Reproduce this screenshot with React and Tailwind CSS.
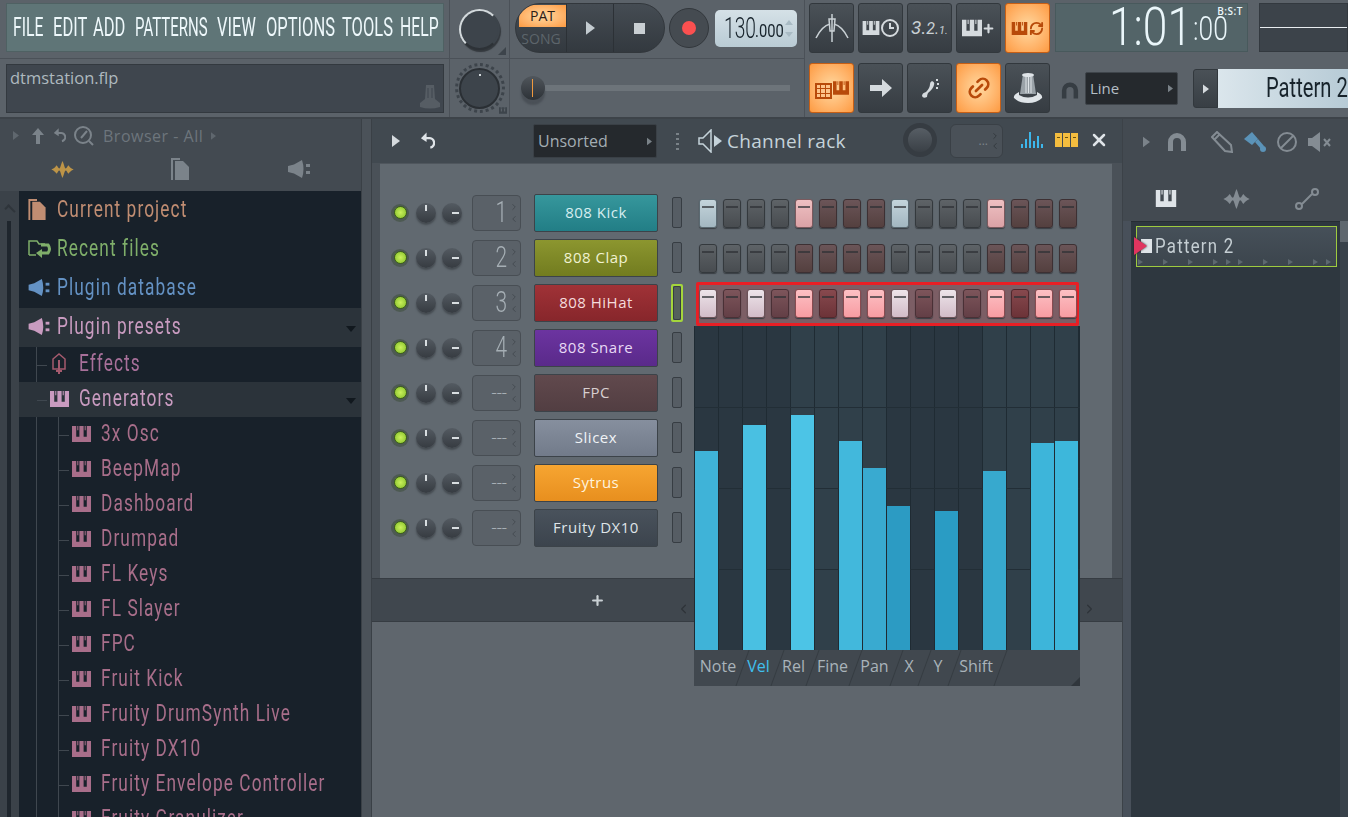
import { Link2, RefreshCw, Plus, X, ChevronLeft, ChevronRight } from "lucide-react";

const roboto = "font-['Roboto','Liberation_Sans',sans-serif]";
const sans = "font-['Open_Sans','Noto_Sans',sans-serif]";

// no condensed face is installed, so narrow text gets squeezed with scale-x
function Narrow({ className, children }) {
  return <span className={`inline-block whitespace-nowrap ${roboto} ${className}`}>{children}</span>;
}

function Piano({ className }) {
  return (
    <svg viewBox="0 0 18 15" className={className} fill="currentColor">
      <path fillRule="evenodd" d="M0 0H18V15H0Z M4 0h3v10H4Z M11 0h3v10h-3Z M5 0h1v4H5Z M12 0h1v4h-1Z" />
    </svg>
  );
}

function Wave({ className }) {
  return (
    <svg viewBox="0 0 21 16" className={className} fill="currentColor">
      <path d="M0 8C3 7 4 5 5 4C6 5 6.500 7 7.500 7C8.500 7 9 3 10.500 0C12 3 12.500 7 13.500 7C14.500 7 15 5 16 4C17 5 18 7 21 8C18 9 17 11 16 12C15 11 14.500 9 13.500 9C12.500 9 12 13 10.500 16C9 13 8.500 9 7.500 9C6.500 9 6 11 5 12C4 11 3 9 0 8Z" />
    </svg>
  );
}

function PluginIcon({ className }) {
  return (
    <svg viewBox="0 0 22 18" className={className} fill="currentColor">
      <path d="M0 6L6 4.500L14 0Q17 9 14 18L6 13.500L0 12Z" />
      <rect x="18" y="4" width="4" height="3" />
      <rect x="18" y="11" width="4" height="3" />
    </svg>
  );
}

function Files({ className }) {
  return (
    <svg viewBox="0 0 18 22" className={className} fill="currentColor">
      <path d="M0 0H9V2H2V22H0Z" />
      <path d="M4 3H12L18 9V22H4Z" />
    </svg>
  );
}

function Magnet({ className }) {
  return (
    <svg viewBox="0 0 20 20" className={className} fill="currentColor">
      <path d="M1 19V10a9 9 0 0 1 18 0V19H14V10a4 4 0 0 0-8 0V19Z" />
    </svg>
  );
}

function UndoIcon({ className }) {
  return (
    <svg viewBox="0 0 16 18" className={className} fill="none" stroke="currentColor" strokeWidth="2.500">
      <path d="M3 6H9a5 5 0 0 1 2 10" />
      <path d="M7 0L1 6L7 10Z" fill="currentColor" stroke="none" />
    </svg>
  );
}

function Tri({ className }) {
  return (
    <svg viewBox="0 0 8 12" className={className} fill="currentColor">
      <path d="M0 0L8 6L0 12Z" />
    </svg>
  );
}

function Knob({ tick = "top" }) {
  return (
    <div className="relative w-5 h-5 rounded-full bg-linear-to-b from-[#545b62] to-[#363b41] shadow-[0_2px_2px_#444a50]">
      {tick === "top" && <div className="absolute left-1/2 top-[2px] -ml-px w-[2px] h-[6px] bg-[#d8dde0]" />}
      {tick === "side" && <div className="absolute left-[10px] top-[9px] w-[7px] h-[2px] bg-[#d8dde0]" />}
    </div>
  );
}

function ToolButton({ on, children }) {
  const look = on
    ? "bg-radial from-[#ffd9a0] to-[#fd9a3f] border-[#c75f15]"
    : "bg-linear-to-b from-[#4a5157] to-[#363c42] border-[#32383d]";
  return (
    <div className={`w-[45px] h-[50px] rounded-[3px] border flex items-center justify-center ${look}`}>
      {children}
    </div>
  );
}

const stepLook = {
  gray: "from-[#5e6367] to-[#484c50] border-[#34393d]",
  brown: "from-[#6b5558] to-[#54403f] border-[#3d3033]",
  blue: "from-[#c4d4db] to-[#a3b7c1] border-[#5b6a72]",
  pink: "from-[#eec0c2] to-[#dba2a6] border-[#7c5a5e]",
  white: "from-[#ede4ea] to-[#d2bcc8] border-[#6c5258]",
  rose: "from-[#fcc0c4] to-[#f79ca2] border-[#8a4b50]",
  wine: "from-[#7d555b] to-[#633f46] border-[#4a3036]",
  dark: "from-[#87494e] to-[#6c3338] border-[#51282d]",
};

function Step({ kind }) {
  return (
    <div className={`w-[18px] h-[29px] rounded-[3px] border bg-linear-to-b pt-[6px] shadow-[0_1px_1px_#3a3f44] ${stepLook[kind]}`}>
      <div className="mx-auto w-[12px] h-[2px] bg-[#2e3135]/70" />
    </div>
  );
}

const channels = [
  { name: "808 Kick", num: "1", color: "from-[#36979c] to-[#227e86]", text: "text-[#d6eef0]" },
  { name: "808 Clap", num: "2", color: "from-[#8c962f] to-[#727c1f]", text: "text-[#f0f2d0]" },
  { name: "808 HiHat", num: "3", color: "from-[#a03237] to-[#87262b]", text: "text-[#f5dcdc]", selected: true },
  { name: "808 Snare", num: "4", color: "from-[#6c34a0] to-[#5a2a8a]", text: "text-[#e8daf5]" },
  { name: "FPC", num: "---", color: "from-[#61494d] to-[#523e42]", text: "text-[#d8cfd0]" },
  { name: "Slicex", num: "---", color: "from-[#868f9e] to-[#727b8a]", text: "text-[#f0f3f6]" },
  { name: "Sytrus", num: "---", color: "from-[#f6a531] to-[#e88f1e]", text: "text-[#fff4df]" },
  { name: "Fruity DX10", num: "---", color: "from-[#49525c] to-[#3c444d]", text: "text-[#dfe4e8]" },
];

const patterns = [
  ["blue", "gray", "gray", "gray", "pink", "brown", "brown", "brown", "blue", "gray", "gray", "gray", "pink", "brown", "brown", "brown"],
  ["gray", "gray", "gray", "gray", "brown", "brown", "brown", "brown", "gray", "gray", "gray", "gray", "brown", "brown", "brown", "brown"],
  ["white", "wine", "white", "wine", "rose", "dark", "rose", "rose", "white", "wine", "white", "wine", "rose", "dark", "rose", "rose"],
];

const bars = [
  ["h-[199px]", "bg-[#3fb3d8]"], null,
  ["h-[225px]", "bg-[#49c0e2]"], null,
  ["h-[235px]", "bg-[#4cc4e6]"], null,
  ["h-[209px]", "bg-[#42b8dc]"],
  ["h-[182px]", "bg-[#39aad0]"],
  ["h-[144px]", "bg-[#2c9bc3]"], null,
  ["h-[139px]", "bg-[#2a9cc4]"], null,
  ["h-[179px]", "bg-[#37a9ce]"], null,
  ["h-[207px]", "bg-[#3db5da]"],
  ["h-[209px]", "bg-[#3db7db]"],
];

const tabs = [
  ["Note", "w-[46px]"], ["Vel", "w-[35px]"], ["Rel", "w-[35px]"], ["Fine", "w-[43px]"],
  ["Pan", "w-[41px]"], ["X", "w-[28px]"], ["Y", "w-[30px]"], ["Shift", "w-[46px]"],
];

const menus = [
  ["FILE", "w-[40px]", "scale-x-[0.63]"], ["EDIT", "w-[40px]", "scale-x-[0.66]"], ["ADD", "w-[42px]", "scale-x-[0.66]"], ["PATTERNS", "w-[82px]", "scale-x-[0.6]"],
  ["VIEW", "w-[49px]", "scale-x-[0.66]"], ["OPTIONS", "w-[76px]", "scale-x-[0.66]"], ["TOOLS", "w-[58px]", "scale-x-[0.66]"], ["HELP", "w-[38px]", "scale-x-[0.63]"],
];

const clipTicks = ["w-[25px]", "w-[25px]", "w-[25px]", "w-[13px]", "w-[12px]", "w-[25px]", "w-[25px]", "w-[25px]", "w-[13px]", "w-[5px]"];

const generators = [
  "3x Osc", "BeepMap", "Dashboard", "Drumpad", "FL Keys", "FL Slayer", "FPC", "Fruit Kick",
  "Fruity DrumSynth Live", "Fruity DX10", "Fruity Envelope Controller", "Fruity Granulizer",
];

function TopBar() {
  return (
    <div className="h-[119px] shrink-0 flex bg-[#5b6269] border-b-2 border-[#3d4349]">
      <div className="w-[450px] shrink-0 flex flex-col border-r border-[#4b5158]">
        <div className="h-[59px] border-b border-[#4b5158] pl-[6px] pt-[3px]">
          <div className="w-[438px] h-[49px] bg-[#5f7577] border border-[#4f6163] flex items-center pl-[6px] text-[#eef8fb]">
            {menus.map(([m, w, s]) => (
              <div key={m} className={w}>
                <Narrow className={`text-[25px] origin-left ${s}`}>{m}</Narrow>
              </div>
            ))}
          </div>
        </div>
        <div className="pl-[6px] pt-[5px]">
          <div className={`relative w-[438px] h-[49px] bg-[#3f464e] border border-[#33393f] pl-[3px] pt-px text-[16.500px] font-medium text-[#aeb9bf] ${sans}`}>
            dtmstation.flp
            <svg viewBox="0 0 20 24" className="absolute right-[3px] bottom-[3px] w-[20px] h-[24px]" fill="#565d64">
              <path d="M6 0H14L15 14L20 18V22Q10 25 0 22V18L5 14Z" />
              <path d="M8 3V13M12 3V13" stroke="#3f464e" strokeWidth="1" />
            </svg>
          </div>
        </div>
      </div>

      <div className="w-[60px] shrink-0 flex flex-col border-r border-[#4b5158]">
        <div className="relative h-[59px] border-b border-[#4b5158] flex items-center justify-center">
          <div className="w-[41px] h-[41px] rounded-full bg-[#3d444b] border-2 border-[#d3d9dc] border-r-[#3d444b] border-b-[#2d3237] shadow-[1px_2px_1px_#33383d]" />
          <div className="absolute right-[3px] bottom-[3px] w-0 h-0 border-l-[8px] border-l-transparent border-b-[8px] border-b-[#3d444b]" />
        </div>
        <div className="relative flex-1 flex items-center justify-center">
          <div className="w-[50px] h-[50px] rounded-full border-[3px] border-dotted border-[#3d444b] flex items-center justify-center">
            <div className="relative w-[41px] h-[41px] rounded-full bg-[#3d444b] border-2 border-[#2a2f34]">
              <div className="absolute left-1/2 top-[4px] -ml-px w-[2px] h-[2px] bg-[#d3d9dc]" />
            </div>
          </div>
          <Piano className="absolute right-[2px] bottom-[3px] w-[8px] h-[7px] text-[#3d444b]" />
        </div>
      </div>

      <div className="w-[295px] shrink-0 flex flex-col border-r border-[#4b5158]">
        <div className="h-[59px] border-b border-[#4b5158] pl-[5px] pt-[3px] flex gap-[4px]">
          <div className="w-[150px] h-[50px] rounded-[25px] bg-linear-to-b from-[#454c53] to-[#33393f] border border-[#32373c] flex overflow-hidden">
            <div className="w-[51px] border-r border-[#2c3136] flex flex-col items-center">
              <div className={`mt-[1px] ml-[3px] w-[47px] h-[22px] rounded-tl-[14px] bg-radial from-[#ffd9a0] to-[#fd9a3f] text-[#2b2018] text-[14px] leading-[22px] text-center ${sans}`}>PAT</div>
              <div className={`mt-[3px] text-[14px] leading-[18px] text-[#5d656b] ${sans}`}>SONG</div>
            </div>
            <div className="w-[47px] border-r border-[#2c3136] flex items-center justify-center">
              <Tri className="w-[9px] h-[14px] text-[#c3cbd0]" />
            </div>
            <div className="flex-1 flex items-center justify-center">
              <div className="w-[11px] h-[11px] bg-[#c9cfd3]" />
            </div>
          </div>
          <div className="w-[40px] h-[40px] mt-[5px] rounded-full bg-[#454b51] border border-[#32373c] flex items-center justify-center">
            <div className="w-[14px] h-[14px] rounded-full bg-[#fb5050]" />
          </div>
          <div className="relative ml-[2px] mt-[7px] w-[82px] h-[37px] rounded-[5px] bg-linear-to-b from-[#d5e1e7] to-[#b9cbd4] text-[#16222a] overflow-hidden">
            <Narrow className="absolute left-[9px] top-[-1px] text-[30px] leading-[38px] font-light origin-left scale-x-[0.64]">130</Narrow>
            <Narrow className="absolute left-[40px] top-[9px] text-[18px] leading-[24px] origin-left scale-x-[0.82]">.000</Narrow>
            <div className="absolute right-[4px] top-[10px] w-0 h-0 border-x-[4px] border-x-transparent border-b-[5px] border-b-[#a9bbc4]" />
            <div className="absolute right-[4px] bottom-[10px] w-0 h-0 border-x-[4px] border-x-transparent border-t-[5px] border-t-[#a9bbc4]" />
          </div>
        </div>
        <div className="flex-1 flex items-center pl-[11px]">
          <div className="relative w-[24px] h-[24px] rounded-full bg-linear-to-b from-[#50565c] to-[#2d3237] shadow-[0_5px_2px_#4a5057] z-10">
            <div className="absolute left-[11px] top-[3px] w-[1px] h-[18px] bg-[#f09a3e]" />
          </div>
          <div className="w-[245px] h-[6px] bg-[#6d747a]" />
        </div>
      </div>

      <div className="w-[250px] shrink-0 flex flex-col pl-[4px] gap-[10px] pt-[3px]">
        <div className="flex gap-[4px]">
          <ToolButton>
            <svg viewBox="0 0 34 28" className="w-[34px] h-[28px]" fill="none" stroke="#c9d0d4" strokeWidth="1.500">
              <path d="M1 24Q7 12 15 10M33 24Q27 12 19 10" />
              <path d="M14 5h6l-1 12h-4Z" />
              <path d="M17 0V28" />
            </svg>
          </ToolButton>
          <ToolButton>
            <div className="flex items-center gap-[1px] text-[#d5dade]">
              <Piano className="w-[18px] h-[14px]" />
              <svg viewBox="0 0 18 18" className="w-[18px] h-[18px]" fill="none" stroke="currentColor" strokeWidth="2">
                <circle cx="9" cy="9" r="8" />
                <path d="M9 4V9H13" />
              </svg>
            </div>
          </ToolButton>
          <ToolButton>
            <div className={`flex items-baseline italic text-[#c9d0d4] ${roboto}`}>
              <span className="text-[19px]">3.</span>
              <span className="text-[16px]">2.</span>
              <span className="text-[11px]">1.</span>
            </div>
          </ToolButton>
          <ToolButton>
            <div className="flex items-center text-[#d5dade]">
              <Piano className="w-[20px] h-[18px]" />
              <Plus className="w-[13px] h-[13px]" strokeWidth={4} />
            </div>
          </ToolButton>
          <ToolButton on>
            <div className="flex items-center gap-[1px] text-[#b84a0a]">
              <Piano className="w-[17px] h-[13px]" />
              <RefreshCw className="w-[15px] h-[15px]" strokeWidth={3} />
            </div>
          </ToolButton>
        </div>
        <div className="flex gap-[4px]">
          <ToolButton on>
            <div className="flex items-end gap-[1px] text-[#b84a0a]">
              <div className="w-[17px] h-[16px] border-2 border-[#b84a0a] grid grid-cols-3 gap-[1px] bg-[#b84a0a]">
                {[0, 1, 2, 3, 4, 5, 6, 7, 8].map((i) => <div key={i} className="bg-[#fdc48a]" />)}
              </div>
              <Piano className="w-[16px] h-[22px]" />
            </div>
          </ToolButton>
          <ToolButton>
            <svg viewBox="0 0 22 18" className="w-[22px] h-[18px]" fill="#d5dade">
              <path d="M0 6H12V0L22 9L12 18V12H0Z" />
            </svg>
          </ToolButton>
          <ToolButton>
            <svg viewBox="0 0 20 22" className="w-[20px] h-[22px]" fill="#d5dade">
              <path d="M12 4Q15 5 14 8Q13 12 8 16Q7 18 7 20Q3 22 2 19Q2 16 6 15Q10 11 10 7Q10 5 12 4Z" />
              <rect x="16" y="2" width="2" height="2" />
              <rect x="17" y="6" width="2" height="2" />
              <rect x="16" y="10" width="2" height="2" />
            </svg>
          </ToolButton>
          <ToolButton on>
            <Link2 className="w-[26px] h-[26px] text-[#b84a0a] -rotate-45" strokeWidth={2.500} />
          </ToolButton>
          <ToolButton>
            <svg viewBox="0 0 30 32" className="w-[30px] h-[32px]">
              <path d="M10 2H20L23 22H7Z" fill="#9aa2a8" />
              <path d="M13 5V21M15.500 5V21M18 5V21" stroke="#dfe4e8" strokeWidth="1" />
              <ellipse cx="15" cy="3" rx="6" ry="2" fill="#dfe4e8" />
              <path d="M6 20Q0 23 1 26Q6 31 15 31Q24 31 29 26Q30 23 24 20L24 23Q15 28 6 23Z" fill="#dfe4e8" />
            </svg>
          </ToolButton>
        </div>
      </div>

      <div className="flex-1 flex flex-col pt-[3px] min-w-0">
        <div className="flex h-[49px]">
          <div className="relative w-[193px] bg-[#536468] border border-[#48595c] text-[#eaf6fa] overflow-hidden">
            <Narrow className="absolute left-[53px] top-0 text-[54px] leading-[46px] font-light origin-left scale-x-[0.82]">1:01</Narrow>
            <Narrow className="absolute left-[137px] top-[13px] text-[33px] leading-[24px] font-light origin-left scale-x-[0.8]">:00</Narrow>
            <span className={`absolute right-[4px] top-[2px] text-[10px] leading-[10px] tracking-[0.5px] font-semibold ${sans}`}>B:S:T</span>
          </div>
          <div className="ml-[11px] flex-1 bg-[#3c434a] border border-[#33393f] flex items-center">
            <div className="w-full h-px bg-[#e8edf0]" />
          </div>
        </div>
        <div className="flex items-center mt-[17px]">
          <Magnet className="w-[18px] h-[19px] ml-[6px] mt-[4px] text-[#363d43]" />
          <div className={`ml-[6px] w-[93px] h-[33px] rounded-[2px] bg-[#25292d] border border-[#3f454b] flex items-center justify-between px-[4px] text-[15px] text-[#b5bfc5] ${sans}`}>
            Line
            <Tri className="w-[5px] h-[9px] text-[#7a8288]" />
          </div>
          <div className="ml-[15px] w-[25px] h-[39px] shrink-0 rounded-l-[3px] bg-linear-to-b from-[#4a5157] to-[#383e44] border border-[#32383d] flex items-center justify-center">
            <Tri className="w-[6px] h-[10px] text-[#d5dade]" />
          </div>
          <div className="flex-1 h-[39px] pl-[48px] bg-linear-to-r from-[#dbe6ec] to-[#b7cbd6] text-[#17232b] overflow-hidden">
            <Narrow className="text-[28px] leading-[38px] origin-left scale-x-[0.72]">Pattern 2</Narrow>
          </div>
        </div>
      </div>
    </div>
  );
}

function BrowserRow({ label, color, indent, icon, open, tall, bg, connector }) {
  return (
    <div className={`relative flex items-center shrink-0 pb-[2px] ${tall ? "h-[39px]" : "h-[35px]"} ${indent} ${bg || ""} ${color}`}>
      {connector && <div className={`absolute top-1/2 w-[10px] h-px bg-[#3f474f] ${connector}`} />}
      <div className="w-[29px] shrink-0 flex items-center">{icon}</div>
      <Narrow className="mb-[2px] text-[24px] leading-[30px] tracking-[1.500px] origin-left scale-x-[0.72]">{label}</Narrow>
      {open && <div className="absolute right-[5px] top-1/2 -mt-[2px] w-0 h-0 border-x-[5px] border-x-transparent border-t-[6px] border-t-[#11181e]" />}
    </div>
  );
}

function Browser() {
  return (
    <div className="w-[361px] shrink-0 flex flex-col bg-[#434a51]">
      <div className="h-[72px] shrink-0">
        <div className={`h-[33px] flex items-center pl-[13px] text-[#6d757c] text-[16px] tracking-[0.5px] ${sans}`}>
          <Tri className="w-[6px] h-[11px] text-[#5f676e]" />
          <svg viewBox="0 0 12 16" className="ml-[13px] w-[12px] h-[16px]" fill="#7b838a">
            <path d="M6 0L12 7H8V16H4V7H0Z" />
          </svg>
          <UndoIcon className="ml-[9px] w-[13px] h-[15px] text-[#7b838a]" />
          <svg viewBox="0 0 20 20" className="ml-[8px] w-[20px] h-[20px]" fill="none" stroke="#7b838a" strokeWidth="2">
            <circle cx="9" cy="9" r="8" />
            <path d="M7 12L13 5M15 15L19 19" />
          </svg>
          <span className="ml-[9px]">Browser - All</span>
          <Tri className="ml-[8px] w-[5px] h-[10px] text-[#5f676e]" />
        </div>
        <div className="relative h-[37px]">
          <Wave className="absolute left-[51px] top-[9px] w-[23px] h-[17px] text-[#bd9447]" />
          <Files className="absolute left-[171px] top-[6px] w-[18px] h-[22px] text-[#7b838a]" />
          <PluginIcon className="absolute left-[288px] top-[8px] w-[22px] h-[18px] text-[#7b838a]" />
        </div>
      </div>
      <div className="flex-1 flex min-h-0">
        <div className="w-[19px] shrink-0 bg-[#3b4249] flex flex-col items-center pt-[14px]">
          <div className="w-[10px] h-[6px] border-l-2 border-t-2 border-[#2f353b] rotate-45 mt-[2px]" />
          <div className="w-[4px] flex-1 mt-[8px] -ml-[2px] bg-[#1f262d]" />
        </div>
        <div className="relative flex-1 bg-[#18212a] flex flex-col overflow-hidden">
          <div className="absolute left-[17px] top-[156px] bottom-0 w-px bg-[#3f474f]" />
          <div className="absolute left-[39px] top-[226px] bottom-0 w-px bg-[#3f474f]" />
          <BrowserRow tall label="Current project" color="text-[#c08d72]" indent="pl-[9px]" icon={<Files className="w-[18px] h-[21px]" />} />
          <BrowserRow tall label="Recent files" color="text-[#7fae6a]" indent="pl-[9px]" icon={
            <svg viewBox="0 0 24 20" className="w-[24px] h-[20px] shrink-0" fill="none" stroke="currentColor" strokeWidth="1.500">
              <path d="M1 16V2H9L11 5H17" />
              <path d="M1 16H8" />
              <path d="M13 6H20Q23 10 20 14H13" strokeWidth="3" />
              <path d="M14 10L8 14L14 19Z" fill="currentColor" stroke="none" />
            </svg>
          } />
          <BrowserRow tall label="Plugin database" color="text-[#6492c4]" indent="pl-[9px]" icon={<PluginIcon className="w-[22px] h-[17px] shrink-0" />} />
          <BrowserRow tall open label="Plugin presets" color="text-[#c99bc0]" indent="pl-[9px]" bg="bg-[#2b333a]" icon={<PluginIcon className="w-[22px] h-[17px] shrink-0" />} />
          <BrowserRow label="Effects" connector="left-[18px]" color="text-[#a8709a]" indent="pl-[31px]" icon={
            <svg viewBox="0 0 14 22" className="w-[14px] h-[22px] shrink-0 ml-[2px]" fill="none" stroke="#a45a6e" strokeWidth="1.500">
              <path d="M1 6L7 1L13 6V16H1Z" />
              <path d="M7 7V21M4 18H10" strokeWidth="2" />
            </svg>
          } />
          <BrowserRow open label="Generators" connector="left-[18px]" color="text-[#c99bc0]" indent="pl-[31px]" bg="bg-[#2b333a]" icon={<Piano className="w-[19px] h-[16px] shrink-0" />} />
          {generators.map((g) => (
            <BrowserRow key={g} label={g} connector="left-[40px]" color="text-[#a86e8a]" indent="pl-[53px]" icon={<Piano className="w-[19px] h-[16px] shrink-0" />} />
          ))}
        </div>
      </div>
    </div>
  );
}

function GraphEditor() {
  return (
    <div className="absolute left-[322px] top-[207px] w-[386px] h-[360px] flex flex-col z-20">
      <div className="relative h-[324px] flex pl-px bg-[#1f2b33]">
        <div className="absolute inset-x-0 top-[81px] h-px bg-[#222e36]" />
        <div className="absolute inset-x-0 top-[162px] h-px bg-[#222e36]" />
        <div className="absolute inset-x-0 top-[243px] h-px bg-[#222e36]" />
        {bars.map((b, i) => {
          const shade = Math.floor(i / 4) % 2 === 0 ? "bg-[#2b3942]/90" : "bg-[#32424d]/90";
          return (
            <div key={i} className={`w-[23px] mr-px flex flex-col justify-end ${shade}`}>
              {b && <div className={`relative ${b[0]} ${b[1]}`} />}
            </div>
          );
        })}
      </div>
      <div className={`relative flex-1 bg-[#41484f] flex items-center pl-px text-[16px] text-[#a9b3ba] ${sans}`}>
        {tabs.map(([t, w]) => (
          <div key={t} className={`relative h-full pb-[4px] flex items-center justify-center ${w} ${t === "Vel" ? "text-[#3fc0ee]" : ""}`}>
            {t}
            <div className="absolute -right-[2px] top-0 h-full w-px bg-[#363c42] -skew-x-[20deg]" />
          </div>
        ))}
        <div className="absolute right-0 bottom-0 w-0 h-0 border-l-[9px] border-l-transparent border-b-[9px] border-b-[#30363c]" />
      </div>
    </div>
  );
}

function ChannelRow({ ch, index }) {
  const steps = patterns[index];
  return (
    <div className="relative h-[45px] flex items-center pl-[11px]">
      <div className="w-[18px] h-[18px] rounded-full bg-[#4d5a52] flex items-center justify-center">
        <div className="w-[13px] h-[13px] rounded-full border border-[#3c6018] bg-radial from-[#c9f05a] to-[#84c026]" />
      </div>
      <div className="ml-[7px]"><Knob /></div>
      <div className="ml-[6px]"><Knob tick="side" /></div>
      <div className="relative ml-[10px] w-[49px] h-[36px] rounded-[4px] bg-[#5a6168] border border-[#484e54] flex items-center justify-end pr-[13px] text-[#a6afb5]">
        <Narrow className={`font-light origin-right ${ch.num === "---" ? "text-[18px] scale-x-[1]" : "text-[29px] scale-x-[0.72]"}`}>{ch.num}</Narrow>
        <ChevronRight className="absolute right-px top-[6px] w-[10px] h-[10px] text-[#41474d]" strokeWidth={2} />
        <ChevronLeft className="absolute right-px bottom-[6px] w-[10px] h-[10px] text-[#41474d]" strokeWidth={2} />
      </div>
      <div className={`ml-[13px] w-[124px] h-[38px] rounded-[2px] border border-[#3c4349] bg-linear-to-b flex items-center justify-center text-[15px] tracking-[0.5px] ${sans} ${ch.color} ${ch.text}`}>
        {ch.name}
      </div>
      <div className={`ml-[13px] w-[12px] h-[38px] flex items-center justify-center rounded-[2px] ${ch.selected ? "border-2 border-[#a4d63c]" : ""}`}>
        <div className={`w-[10px] rounded-[2px] border border-[#373d43] ${ch.selected ? "h-[34px] bg-[#54605c]" : "h-[31px] bg-[#565d64]"}`} />
      </div>
      {steps && (
        <div className="ml-[16px] mt-[2px] flex gap-[6px]">
          {ch.selected && <div className="absolute left-[316px] top-[2px] w-[383px] h-[44px] border-[3px] border-[#e81f25] rounded-[2px] bg-[#b04a50]/35" />}
          {steps.map((k, i) => (
            <div key={i} className="relative"><Step kind={k} /></div>
          ))}
        </div>
      )}
    </div>
  );
}

function ChannelRack() {
  return (
    <div className="relative w-[750px] shrink-0 flex flex-col bg-[#5f666d]">
      <div className="bg-[#4a5158] flex flex-col">
        <div className={`relative h-[44px] shrink-0 bg-[#414950] flex items-center ${sans}`}>
          <Tri className="ml-[20px] w-[8px] h-[12px] text-[#d5dade]" />
          <UndoIcon className="ml-[20px] w-[15px] h-[18px] text-[#dfe4e8]" />
          <div className="ml-[98px] w-[124px] h-[34px] rounded-[2px] bg-[#25292d] border border-[#3a4046] flex items-center justify-between px-[4px] text-[16px] text-[#a3adb3]">
            Unsorted
            <Tri className="w-[5px] h-[9px] text-[#7a8288]" />
          </div>
          <div className="ml-[19px] flex flex-col gap-[3px]">
            {[0, 1, 2, 3].map((i) => <div key={i} className="w-[3px] h-[2px] bg-[#7a8288]" />)}
          </div>
          <svg viewBox="0 0 24 24" className="ml-[19px] w-[24px] h-[24px]" fill="none" stroke="#c5d3da" strokeWidth="1.500">
            <path d="M1 9H5L13 1V23L5 15H1Z" />
            <path d="M16 6L24 12L16 18Z" fill="#c5d3da" stroke="none" />
          </svg>
          <span className="ml-[5px] text-[19px] text-[#c5d3da] tracking-[0.3px]">Channel rack</span>
          <div className="absolute left-[531px] top-[4px] w-[34px] h-[34px] rounded-full bg-[#363c42] flex items-center justify-center">
            <div className="w-[24px] h-[24px] rounded-full bg-linear-to-b from-[#575e65] to-[#3a4046]" />
          </div>
          <div className="absolute left-[578px] top-[5px] w-[53px] h-[34px] rounded-[6px] bg-[#4a5158] border border-[#3a4046] flex items-center justify-end pr-[14px] text-[#7d858b] text-[12px]">
            ...
            <ChevronRight className="absolute right-[2px] top-[6px] w-[10px] h-[10px] text-[#2f353a]" strokeWidth={2} />
            <ChevronLeft className="absolute right-[2px] bottom-[6px] w-[10px] h-[10px] text-[#2f353a]" strokeWidth={2} />
          </div>
          <svg viewBox="0 0 23 16" className="absolute left-[649px] top-[13px] w-[23px] h-[16px]" fill="#3db7eb">
            <rect x="0" y="12" width="2" height="4" /><rect x="4" y="7" width="2" height="9" /><rect x="8" y="0" width="2" height="16" />
            <rect x="12" y="9" width="2" height="7" /><rect x="16" y="4" width="2" height="12" /><rect x="20" y="12" width="2" height="4" />
          </svg>
          <div className="absolute left-[683px] top-[14px] flex gap-px">
            {[0, 1, 2].map((i) => (
              <div key={i} className="w-[7px] h-[14px] bg-[#f4bd3f] pt-[4px]"><div className="mx-auto w-[3px] h-px bg-[#6a5010]" /></div>
            ))}
          </div>
          <X className="absolute left-[717px] top-[11px] w-[20px] h-[20px] text-[#dfe4e8]" strokeWidth={3} />
        </div>
        <div className="ml-[8px] mr-[10px] h-[415px] bg-[#616970] pt-[26px] border-t border-[#4f565d]">
          {channels.map((ch, i) => (
            <ChannelRow key={ch.name} ch={ch} index={i} />
          ))}
        </div>
      </div>
      <div className="relative h-[44px] bg-[#40474e] border-y border-[#363c42]">
        <Plus className="absolute left-[218px] top-[14px] w-[15px] h-[15px] text-[#c9d0d4]" strokeWidth={3.500} />
        <ChevronLeft className="absolute left-[304px] top-[21px] w-[15px] h-[18px] text-[#2e3439]" strokeWidth={2} />
        <ChevronRight className="absolute left-[710px] top-[21px] w-[15px] h-[18px] text-[#2e3439]" strokeWidth={2} />
      </div>
      <div className="flex-1" />
      <GraphEditor />
    </div>
  );
}

function Playlist() {
  return (
    <div className="flex-1 min-w-0 flex flex-col bg-[#434a51] border-l border-[#3c4248]">
      <div className="h-[102px] shrink-0">
        <div className="h-[46px] flex items-center pl-[20px] text-[#7b838a]">
          <Tri className="w-[7px] h-[12px]" />
          <Magnet className="ml-[17px] w-[20px] h-[20px] text-[#848c93]" />
          <svg viewBox="0 0 22 22" className="ml-[24px] w-[22px] h-[22px]" fill="none" stroke="#848c93" strokeWidth="2">
            <path d="M1 6L6 1L20 14L21 21L14 20Z" />
            <path d="M3 9L9 3" />
          </svg>
          <svg viewBox="0 0 24 22" className="ml-[10px] w-[24px] h-[22px]" fill="#5b93b8">
            <path d="M1 8L9 1L15 8L9 14Z" />
            <path d="M12 11L15 8L21 15L18 18Z" />
            <circle cx="20" cy="18" r="3" />
          </svg>
          <svg viewBox="0 0 20 20" className="ml-[10px] w-[20px] h-[20px]" fill="none" stroke="#848c93" strokeWidth="2">
            <circle cx="10" cy="10" r="9" />
            <path d="M4 16L16 4" />
          </svg>
          <svg viewBox="0 0 24 20" className="ml-[11px] w-[24px] h-[20px]" fill="#848c93">
            <path d="M0 6H4L12 0V20L4 14H0Z" />
            <path d="M16 7L22 14M22 7L16 14" stroke="#848c93" strokeWidth="2" />
          </svg>
        </div>
        <div className="relative h-[56px]">
          <Piano className="absolute left-[31px] top-[25px] w-[24px] h-[17px] text-[#dfe4e8]" />
          <Wave className="absolute left-[98px] top-[24px] w-[31px] h-[20px] text-[#848c93]" />
          <svg viewBox="0 0 24 22" className="absolute left-[172px] top-[23px] w-[24px] h-[22px]" fill="none" stroke="#848c93" strokeWidth="2">
            <circle cx="4" cy="18" r="3" />
            <circle cx="20" cy="4" r="3" />
            <path d="M7 16L17 6" />
          </svg>
        </div>
      </div>
      <div className="flex-1 flex min-h-0">
        <div className="w-[8px] shrink-0 bg-[#48505a]" />
        <div className="flex-1 bg-[#2e373f] pl-[5px] pr-[3px] pt-[4px] border-t border-[#262d33]">
          <div className="relative h-[41px] bg-linear-to-b from-[#465059] to-[#3c454d] border border-[#9ecb3f] flex items-center pl-[18px] pb-[2px] text-[#c5ced3]">
            <Narrow className="text-[20px] tracking-[1.500px] origin-left scale-x-[0.84]">Pattern 2</Narrow>
            <div className="absolute left-[4px] top-[12px] w-[11px] h-[14px] bg-[#dfe4e8]" />
            <div className="absolute -left-[3px] top-[10px] w-0 h-0 border-y-[9px] border-y-[#00000000] border-l-[13px] border-l-[#e0355f] drop-shadow-[0_0_1px_#222]" />
            <div className="absolute bottom-px left-[1px] right-0 flex">
              {clipTicks.map((w, i) => (
                <div key={i} className={`${w} shrink-0`}>
                  <div className="w-0 h-0 border-y-[3px] border-y-transparent border-l-[5px] border-l-[#5d6870]" />
                </div>
              ))}
            </div>
          </div>
        </div>
        <div className="w-[8px] shrink-0 bg-[#39424a]">
          <div className="h-[21px] bg-[#5f676e]" />
        </div>
      </div>
    </div>
  );
}

export default function App() {
  return (
    <div className="w-[1348px] h-[817px] overflow-hidden flex flex-col bg-[#5b6269]">
      <TopBar />
      <div className="flex-1 flex min-h-0">
        <Browser />
        <div className="w-[11px] shrink-0 bg-[#4b5259] border-x border-[#3a4046]" />
        <ChannelRack />
        <Playlist />
      </div>
    </div>
  );
}
